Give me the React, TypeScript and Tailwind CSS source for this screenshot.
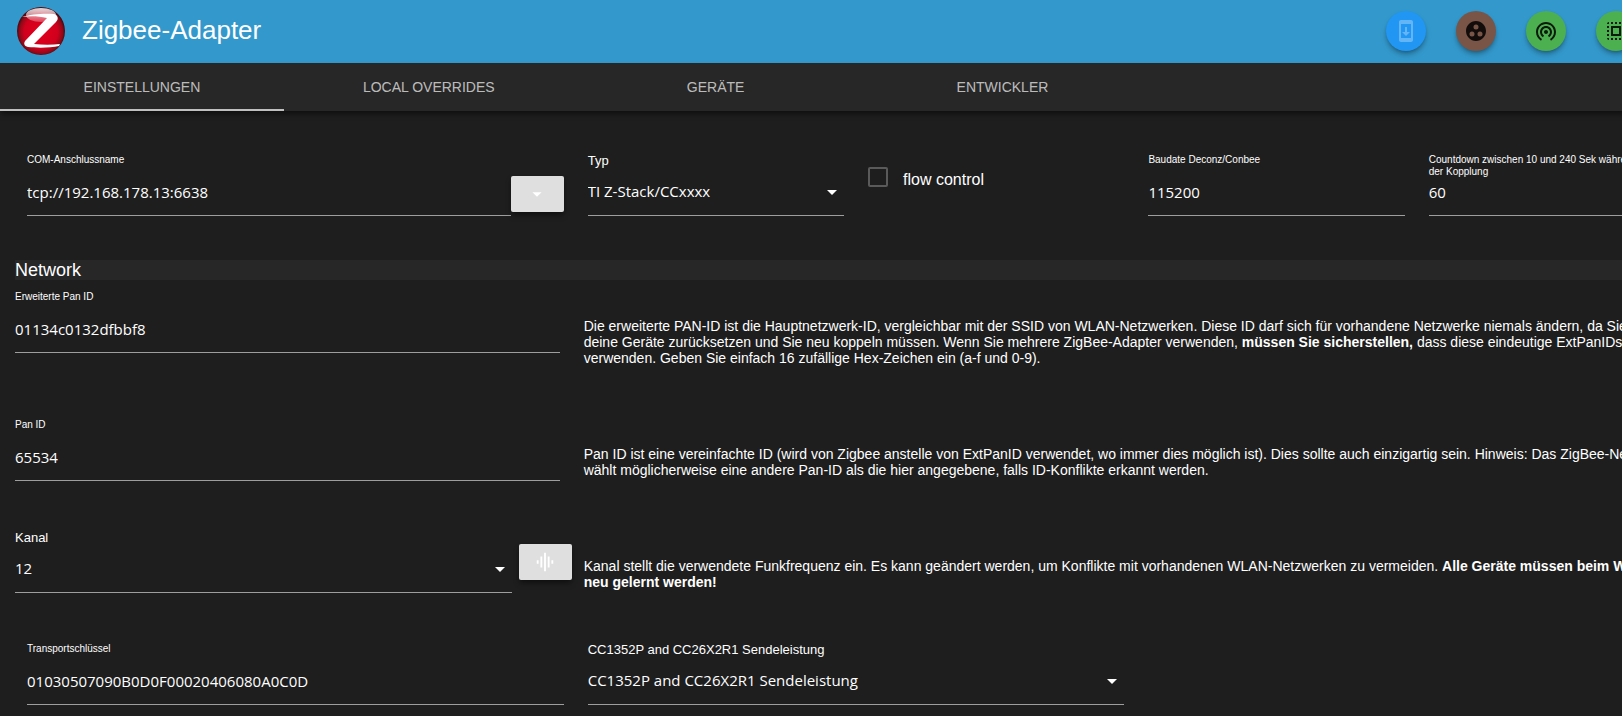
import React, { useState } from 'react';
import {
  MdArrowDropDown,
  MdGraphicEq,
  MdGroupWork,
  MdSelectAll,
  MdSystemUpdate,
  MdWifiTethering,
} from 'react-icons/md';

const TABS = ['Einstellungen', 'Local Overrides', 'Geräte', 'Entwickler'];

const ACTIONS = [
  { id: 'update', label: 'Firmware aktualisieren', icon: MdSystemUpdate, className: 'bg-[#2196f3] text-white/30', disabled: true },
  { id: 'groups', label: 'Gruppen', icon: MdGroupWork, className: 'bg-[#795548] text-black/85', disabled: false },
  { id: 'pairing', label: 'Kopplung starten', icon: MdWifiTethering, className: 'bg-[#4caf50] text-black/85', disabled: false },
  { id: 'select', label: 'Alle auswählen', icon: MdSelectAll, className: 'bg-[#4caf50] text-black/85', disabled: false },
];

const Logo: React.FC = () => (
  <svg className="h-12 w-12 shrink-0" viewBox="0 0 48 48" aria-hidden="true">
    <defs>
      <radialGradient id="ball" cx="50%" cy="52%" r="50%">
        <stop offset="0" stopColor="#e2001f" />
        <stop offset="0.7" stopColor="#d0001c" />
        <stop offset="0.9" stopColor="#8e0a18" />
        <stop offset="1" stopColor="#4a0a12" />
      </radialGradient>
      <linearGradient id="gloss" x1="0" y1="0" x2="0" y2="1">
        <stop offset="0" stopColor="#fff" stopOpacity="0.85" />
        <stop offset="1" stopColor="#fff" stopOpacity="0.25" />
      </linearGradient>
    </defs>
    <circle cx="24" cy="24" r="24" fill="url(#ball)" />
    <ellipse cx="24" cy="8" rx="15" ry="7" fill="url(#gloss)" />
    <path
      d="M5 10C14 7 28 6 37 7C41 8 42 12 39 15L17 37C26 38 35 38 43 37L42 39C33 41 20 41 11 40C7 39 6 36 9 33L30 11C21 9 13 9 5 10Z"
      fill="#fff"
    />
  </svg>
);

interface FieldProps {
  id: string;
  label: React.ReactNode;
  value: string;
}

const TextField: React.FC<FieldProps> = ({ id, label, value }) => (
  <div className="flex min-w-0 flex-1 flex-col">
    <label htmlFor={id} className="h-[14px] text-[10px] leading-[12px] whitespace-nowrap">{label}</label>
    <input
      id={id}
      type="text"
      defaultValue={value}
      className="h-12 w-full border-b border-[#9e9e9e] bg-transparent font-['Open_Sans',sans-serif] text-[15px] outline-none"
    />
  </div>
);

const SelectField: React.FC<FieldProps> = ({ id, label, value }) => (
  <div className="flex min-w-0 flex-1 flex-col">
    <label htmlFor={id} className="h-[14px] text-[13px] leading-[14px] whitespace-nowrap">{label}</label>
    <div className="relative">
      <select
        id={id}
        defaultValue={value}
        className="h-12 w-full appearance-none border-b border-[#9e9e9e] bg-transparent font-['Open_Sans',sans-serif] text-[15px] outline-none"
      >
        <option value={value}>{value}</option>
      </select>
      <MdArrowDropDown className="pointer-events-none absolute top-3 right-0 h-6 w-6" />
    </div>
  </div>
);

const raised = 'flex h-9 w-[53px] shrink-0 items-center justify-center self-end rounded-xs bg-[#dfdfdf] text-white shadow-md shadow-black/40';

const App: React.FC = () => {
  const [activeTab, setActiveTab] = useState(0);
  const [flowControl, setFlowControl] = useState(false);

  return (
    <div className="min-h-screen overflow-x-hidden bg-[#1e1e1e] font-['Liberation_Sans',Arial,sans-serif] text-white">
      <div className="w-[105%]">
        <header className="flex h-[63px] items-center bg-[#3399cc] pr-[67px] pb-px pl-[17px]">
          <Logo />
          <h1 className="ml-[17px] pb-[3px] text-[26px] leading-[30px]">Zigbee-Adapter</h1>
          <div className="ml-auto flex gap-[30px]">
            {ACTIONS.map(({ id, label, icon: Icon, className, disabled }) => (
              <button
                key={id}
                type="button"
                aria-label={label}
                disabled={disabled}
                className={`flex h-10 w-10 items-center justify-center rounded-full shadow-md shadow-black/30 ${className}`}
              >
                <Icon className="h-6 w-6" />
              </button>
            ))}
          </div>
        </header>

        <nav className="flex h-12 gap-[3px] bg-[#272727] shadow-md shadow-black/40">
          {TABS.map((tab, i) => (
            <button
              key={tab}
              type="button"
              onClick={() => setActiveTab(i)}
              className={`w-1/6 border-b-2 pt-0.5 text-sm text-white/70 uppercase ${
                i === activeTab ? 'border-[#c0c0c0]' : 'border-transparent'
              }`}
            >
              {tab}
            </button>
          ))}
        </nav>

        <main className="pt-[43px] pr-[6px] pl-[15px]">
          <div className="grid grid-cols-12">
            <div className="col-span-4 flex px-3">
              <TextField id="port" label="COM-Anschlussname" value="tcp://192.168.178.13:6638" />
              <button type="button" aria-label="Anschluss wählen" className={`${raised} mb-1`}>
                <MdArrowDropDown className="h-[22px] w-[22px]" />
              </button>
            </div>
            <div className="col-span-2 flex px-3">
              <SelectField id="type" label="Typ" value="TI Z-Stack/CCxxxx" />
            </div>
            <div className="col-span-2 px-3 pt-[13px]">
              <label className="flex items-start gap-[15px] text-base leading-[25px]">
                <input
                  type="checkbox"
                  checked={flowControl}
                  onChange={(e) => setFlowControl(e.target.checked)}
                  className="h-5 w-5 appearance-none rounded-xs border-2 border-[#5a5a5a] checked:bg-[#3399cc]"
                />
                flow control
              </label>
            </div>
            <div className="col-span-2 flex px-3">
              <TextField id="baud" label="Baudate Deconz/Conbee" value="115200" />
            </div>
            <div className="col-span-2 flex px-3">
              <TextField
                id="countdown"
                label={<>Countdown zwischen 10 und 240 Sek während<br />der Kopplung</>}
                value="60"
              />
            </div>
          </div>

          <h2 className="mt-11 bg-[#272727] text-lg leading-[20px]">Network</h2>

          <div className="mt-[11px] grid grid-cols-12">
            <div className="col-span-4 flex pr-4">
              <TextField id="extPanId" label="Erweiterte Pan ID" value="01134c0132dfbbf8" />
            </div>
            <p className="col-span-8 px-2 pt-[27px] text-sm leading-4">
              Die erweiterte PAN-ID ist die Hauptnetzwerk-ID, vergleichbar mit der SSID von WLAN-Netzwerken. Diese ID darf
              sich für vorhandene Netzwerke niemals ändern, da Sie sonst deine Geräte zurücksetzen und Sie neu koppeln
              müssen. Wenn Sie mehrere ZigBee-Adapter verwenden, <b>müssen Sie sicherstellen,</b> dass diese eindeutige
              ExtPanIDs verwenden. Geben Sie einfach 16 zufällige Hex-Zeichen ein (a-f und 0-9).
            </p>
          </div>

          <div className="mt-[53px] grid grid-cols-12">
            <div className="col-span-4 flex pr-4">
              <TextField id="panId" label="Pan ID" value="65534" />
            </div>
            <p className="col-span-8 px-2 pt-[27px] text-sm leading-4">
              Pan ID ist eine vereinfachte ID (wird von Zigbee anstelle von ExtPanID verwendet, wo immer dies möglich ist).
              Dies sollte auch einzigartig sein. Hinweis: Das ZigBee-Netzwerk wählt möglicherweise eine andere Pan-ID als
              die hier angegebene, falls ID-Konflikte erkannt werden.
            </p>
          </div>

          <div className="mt-[50px] grid grid-cols-12">
            <div className="col-span-4 flex gap-[7px] pr-1">
              <SelectField id="channel" label="Kanal" value="12" />
              <button type="button" aria-label="Kanäle scannen" className={`${raised} mb-[13px]`}>
                <MdGraphicEq className="h-[22px] w-[22px]" />
              </button>
            </div>
            <p className="col-span-8 px-2 pt-[27px] text-sm leading-4">
              Kanal stellt die verwendete Funkfrequenz ein. Es kann geändert werden, um Konflikte mit vorhandenen
              WLAN-Netzwerken zu vermeiden. <b>Alle Geräte müssen beim Wechsel neu gelernt werden!</b>
            </p>
          </div>

          <div className="mt-[50px] grid grid-cols-12">
            <div className="col-span-4 flex px-3">
              <TextField id="key" label="Transportschlüssel" value="01030507090B0D0F00020406080A0C0D" />
            </div>
            <div className="col-span-4 flex px-3">
              <SelectField
                id="power"
                label="CC1352P and CC26X2R1 Sendeleistung"
                value="CC1352P and CC26X2R1 Sendeleistung"
              />
            </div>
          </div>
        </main>
      </div>
    </div>
  );
};

export default App;
